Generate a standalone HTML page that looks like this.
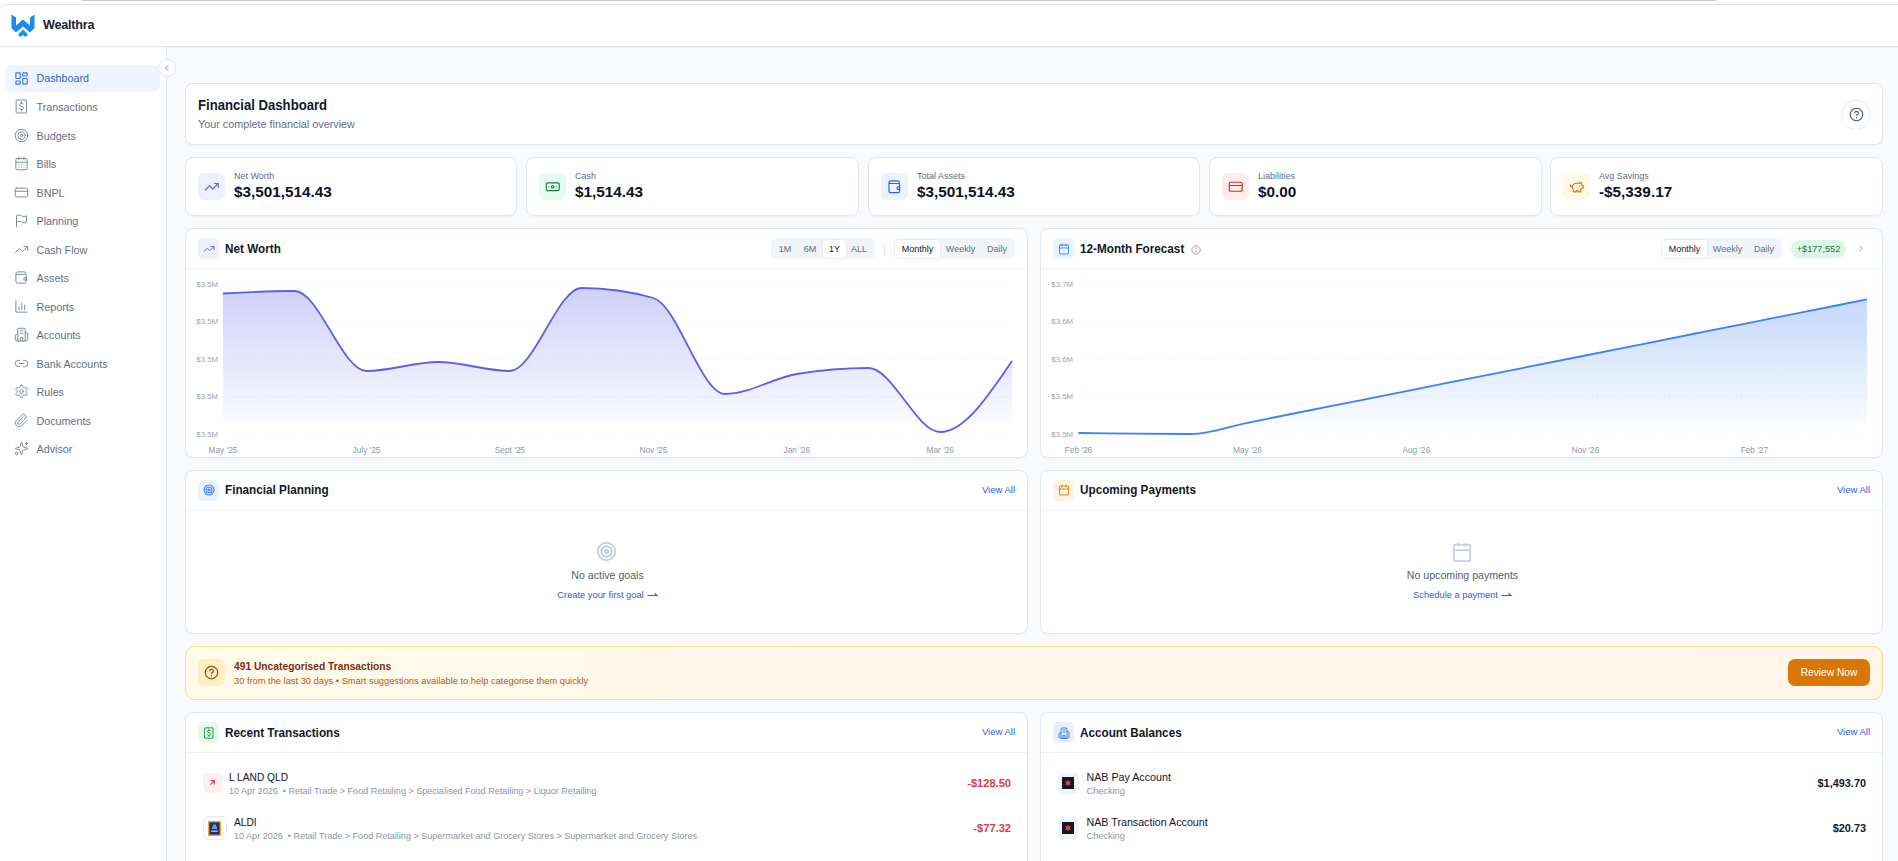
<!DOCTYPE html>
<html><head><meta charset="utf-8">
<style>
*{box-sizing:border-box;margin:0;padding:0}
html,body{width:1898px;height:861px;overflow:hidden}
body{font-family:"Liberation Sans",sans-serif;background:#f8fafc;position:relative;color:#0f172a}
.abs{position:absolute}
#topbar{position:absolute;left:82px;top:0;width:1634px;height:1px;background:#c9cacd}
#header{position:absolute;left:0;top:4px;width:1898px;height:43px;background:#fff;border-top:1px solid #e3e3e3;border-bottom:1px solid #e3e8ee;border-top-left-radius:7px;box-shadow:0 1px 2px rgba(15,23,42,.05);z-index:2}
#sidebar{position:absolute;left:0;top:47px;width:167px;height:814px;background:#fff;border-right:1px solid #e2e8f0}
.nav{position:absolute;left:5px;width:155px;height:27px;border-radius:7px;display:flex;align-items:center;font-size:10.75px;color:#5f6f86}
.nav svg{position:absolute;left:9px;width:15px;height:15px;fill:none;stroke:#74839a;stroke-width:1.5;stroke-linecap:round;stroke-linejoin:round}
.nav svg use{}
.nav span{position:absolute;left:31.5px}
.nav.active{background:#eff5fe;color:#2b63e6}
.nav.active svg{stroke:#3b74ee;stroke-width:1.9}
.nav.active span{top:6.5px}
.card{position:absolute;background:#fff;border:1px solid #e1e7ef;border-radius:8px;box-shadow:0 1px 2px rgba(15,23,42,.04)}
.stat .ic{position:absolute;left:12px;top:15px;width:27px;height:27px;border-radius:6px;display:flex;align-items:center;justify-content:center}
.stat .lb{position:absolute;left:48px;top:13px;font-size:9px;color:#5f6f86}
.stat .vl{position:absolute;left:48px;top:25px;font-size:15.3px;font-weight:bold;color:#0b1324}
.ch{position:absolute;left:0;top:0;right:0;height:40px;border-bottom:1px solid #edf1f6}
.ch .ic{position:absolute;left:12px;top:9px;width:21px;height:21px;border-radius:5px;display:flex;align-items:center;justify-content:center}
.ch .tt{position:absolute;left:39px;top:12px;font-size:12.9px;transform:scaleX(0.91);transform-origin:0 0;white-space:nowrap;font-weight:bold;color:#111827}
.up1 .ic{padding-bottom:2px}.up1 .tt{top:10.7px}
.viewall{position:absolute;right:12px;top:12.5px;font-size:9.5px;color:#2c5ee6}
.seg{position:absolute;top:9px;height:21px;background:#f1f4f8;border-radius:6px;font-size:9px;color:#5f6f86}
.seg span{position:absolute;top:1.5px;height:18px;line-height:18px;text-align:center;border-radius:4px}
.seg span.on{background:#fff;color:#111827;box-shadow:0 0 0 1px #e8edf3}
</style></head>
<body>
<svg width="0" height="0" style="position:absolute">
<defs>
<symbol id="i-dash" viewBox="0 0 24 24"><rect width="7" height="9" x="3" y="3" rx="0.8"/><rect width="7" height="5" x="14" y="3" rx="0.8"/><rect width="7" height="9" x="14" y="12" rx="0.8"/><rect width="7" height="5" x="3" y="16" rx="0.8"/></symbol>
<symbol id="i-receipt" viewBox="0 0 24 24"><path d="M4 2l2-.7 2 .7 2-.7 2 .7 2-.7 2 .7 2-.7 2 .7V22l-2 .7-2-.7-2 .7-2-.7-2 .7-2-.7-2 .7-2-.7z"/><path d="M15.2 8.3c-.5-1-1.6-1.8-3.2-1.8-1.9 0-3.2 1-3.2 2.5 0 3.4 6.4 2 6.4 5.2 0 1.6-1.3 2.6-3.2 2.6-1.6 0-2.8-.7-3.3-1.9"/><path d="M12 4.5v2M12 16.8v2.2"/></symbol>
<symbol id="i-target" viewBox="0 0 24 24"><circle cx="12" cy="12" r="10"/><circle cx="12" cy="12" r="6"/><circle cx="12" cy="12" r="2"/></symbol>
<symbol id="i-cal" viewBox="0 0 24 24"><path d="M8 2v4"/><path d="M16 2v4"/><rect width="18" height="18" x="3" y="4" rx="2"/><path d="M3 10h18"/><path d="M8 14h.01M12 14h.01M16 14h.01M8 18h.01M12 18h.01M16 18h.01"/></symbol>
<symbol id="i-cal2" viewBox="0 0 24 24"><path d="M8 2v4"/><path d="M16 2v4"/><rect width="18" height="18" x="3" y="4" rx="2"/><path d="M3 10h18"/></symbol>
<symbol id="i-card" viewBox="0 0 24 24"><rect width="20" height="14" x="2" y="5" rx="2"/><line x1="2" x2="22" y1="10" y2="10"/></symbol>
<symbol id="i-flag" viewBox="0 0 24 24"><path d="M4 22V4.5c3-1.5 6-1.5 8 0s5 1.5 8 0v10c-3 1.5-6 1.5-8 0s-5-1.5-8 0"/></symbol>
<symbol id="i-trend" viewBox="0 0 24 24"><polyline points="22 7 13.5 15.5 8.5 10.5 2 17"/><polyline points="16 7 22 7 22 13"/></symbol>
<symbol id="i-wallet" viewBox="0 0 24 24"><path d="M19 7V5.5A2.5 2.5 0 0 0 16.5 3H6a3 3 0 0 0-3 3v12a3 3 0 0 0 3 3h11.5a2 2 0 0 0 2-2v-10a2 2 0 0 0-2-2H3.5"/><path d="M19.5 12.2h-2a2 2 0 0 0 0 4h2z"/></symbol>
<symbol id="i-bars" viewBox="0 0 24 24"><path d="M3 3v18h18"/><path d="M17 17V10"/><path d="M12.5 17V6"/><path d="M8 17v-4"/></symbol>
<symbol id="i-bank" viewBox="0 0 24 24"><path d="M6 22V4a2 2 0 0 1 2-2h8a2 2 0 0 1 2 2v18Z"/><path d="M6 12H4a2 2 0 0 0-2 2v6a2 2 0 0 0 2 2h2"/><path d="M18 9h2a2 2 0 0 1 2 2v9a2 2 0 0 1-2 2h-2"/><path d="M10 6h4"/><path d="M10 10h4"/><path d="M10 22v-5h4v5"/></symbol>
<symbol id="i-link" viewBox="0 0 24 24"><path d="M9 17H7A5 5 0 0 1 7 7h2"/><path d="M15 7h2a5 5 0 1 1 0 10h-2"/><line x1="8" x2="16" y1="12" y2="12"/></symbol>
<symbol id="i-gear" viewBox="0 0 24 24"><path d="M12.22 2h-.44a2 2 0 0 0-2 2v.18a2 2 0 0 1-1 1.73l-.43.25a2 2 0 0 1-2 0l-.15-.08a2 2 0 0 0-2.73.73l-.22.38a2 2 0 0 0 .73 2.73l.15.1a2 2 0 0 1 1 1.72v.51a2 2 0 0 1-1 1.74l-.15.09a2 2 0 0 0-.73 2.73l.22.38a2 2 0 0 0 2.73.73l.15-.08a2 2 0 0 1 2 0l.43.25a2 2 0 0 1 1 1.73V20a2 2 0 0 0 2 2h.44a2 2 0 0 0 2-2v-.18a2 2 0 0 1 1-1.730l.43-.25a2 2 0 0 1 2 0l.15.08a2 2 0 0 0 2.73-.73l.22-.39a2 2 0 0 0-.73-2.73l-.15-.08a2 2 0 0 1-1-1.74v-.5a2 2 0 0 1 1-1.74l.15-.09a2 2 0 0 0 .73-2.73l-.22-.38a2 2 0 0 0-2.73-.73l-.15.08a2 2 0 0 1-2 0l-.43-.25a2 2 0 0 1-1-1.73V4a2 2 0 0 0-2-2z"/><circle cx="12" cy="12" r="3"/></symbol>
<symbol id="i-clip" viewBox="0 0 24 24"><path d="m21.44 11.05-9.19 9.19a6 6 0 0 1-8.490-8.49l8.57-8.57A4 4 0 1 1 18 8.84l-8.59 8.57a2 2 0 0 1-2.83-2.83l8.49-8.48"/></symbol>
<symbol id="i-spark" viewBox="0 0 24 24"><path d="M9.937 15.5A2 2 0 0 0 8.5 14.063l-6.135-1.582a.5.5 0 0 1 0-.962L8.5 9.936A2 2 0 0 0 9.937 8.5l1.582-6.135a.5.5 0 0 1 .963 0L14.063 8.5A2 2 0 0 0 15.5 9.937l6.135 1.581a.5.5 0 0 1 0 .964L15.5 14.063a2 2 0 0 0-1.437 1.437l-1.582 6.135a.5.5 0 0 1-.963 0z"/><path d="M20 2v4"/><path d="M22 4h-4"/><circle cx="4" cy="20" r="2"/></symbol>
<symbol id="i-help" viewBox="0 0 24 24"><circle cx="12" cy="12" r="10"/><path d="M9.09 9a3 3 0 0 1 5.83 1c0 2-3 3-3 3"/><path d="M12 17h.01"/></symbol>
<symbol id="i-globe" viewBox="0 0 24 24"><circle cx="12" cy="12" r="10"/><path d="M12 2a14.5 14.5 0 0 0 0 20 14.5 14.5 0 0 0 0-20"/><path d="M2 12h20"/></symbol>
<symbol id="i-moon" viewBox="0 0 24 24"><path d="M12 3a6 6 0 0 0 9 9 9 9 0 1 1-9-9Z"/></symbol>
<symbol id="i-bell" viewBox="0 0 24 24"><path d="M6 8a6 6 0 0 1 12 0c0 7 3 9 3 9H3s3-2 3-9"/><path d="M10.3 21a1.94 1.94 0 0 0 3.4 0"/></symbol>
<symbol id="i-money" viewBox="0 0 24 24"><rect width="20" height="12" x="2" y="6" rx="2"/><circle cx="12" cy="12" r="2"/><path d="M6 12h.01M18 12h.01"/></symbol>
<symbol id="i-piggy" viewBox="0 0 24 24"><path d="M19 5c-1.5 0-2.8 1.4-3 2-3.5-1.5-11-.3-11 5 0 1.8 0 3 2 4.5V20h4v-2h3v2h4v-4c1-.5 1.7-1 2-2h2v-4h-2c0-1-.5-1.5-1-2V5z"/><path d="M2 9v1c0 1.1.9 2 2 2h1"/><path d="M16 11h.01"/></symbol>
</defs></svg>
<div class="abs" style="left:0;top:0;width:1898px;height:6px;background:#fff"></div>
<div id="topbar"></div>
<div id="header">
  <svg class="abs" style="left:11px;top:9px" width="25" height="24" viewBox="0 0 25 24">
    <path d="M0.5,0.5 L5,3.5 L5,11.5 L12,5.5 L19,11.5 L19,3.5 L23.5,0.5 L23.5,14 L19,18.5 L12,12.5 L5,18.5 L0.5,14 Z" fill="#1a8bec"/>
    <path d="M7,20.5 L12,15.5 L17,20.5 L14.5,23 L12,21 L9.5,23 Z" fill="#1a8bec"/>
  </svg>
  <div class="abs" style="left:43px;top:13px;font-size:12.6px;font-weight:bold;color:#1a2035;letter-spacing:-0.2px">Wealthra</div>
</div>
<div id="sidebar">
<div class="nav active" style="top:18px"><svg><use href="#i-dash"/></svg><span>Dashboard</span></div>
<div class="nav" style="top:46px"><svg><use href="#i-receipt"/></svg><span>Transactions</span></div>
<div class="nav" style="top:75px"><svg><use href="#i-target"/></svg><span>Budgets</span></div>
<div class="nav" style="top:103px"><svg><use href="#i-cal"/></svg><span>Bills</span></div>
<div class="nav" style="top:132px"><svg><use href="#i-card"/></svg><span>BNPL</span></div>
<div class="nav" style="top:160px"><svg><use href="#i-flag"/></svg><span>Planning</span></div>
<div class="nav" style="top:189px"><svg><use href="#i-trend"/></svg><span>Cash Flow</span></div>
<div class="nav" style="top:217px"><svg><use href="#i-wallet"/></svg><span>Assets</span></div>
<div class="nav" style="top:246px"><svg><use href="#i-bars"/></svg><span>Reports</span></div>
<div class="nav" style="top:274px"><svg><use href="#i-bank"/></svg><span>Accounts</span></div>
<div class="nav" style="top:303px"><svg><use href="#i-link"/></svg><span>Bank Accounts</span></div>
<div class="nav" style="top:331px"><svg><use href="#i-gear"/></svg><span>Rules</span></div>
<div class="nav" style="top:360px"><svg><use href="#i-clip"/></svg><span>Documents</span></div>
<div class="nav" style="top:388px"><svg><use href="#i-spark"/></svg><span>Advisor</span></div>
<div class="abs" style="left:157.5px;top:11.5px;width:18px;height:18px;border-radius:50%;background:#fff;border:1px solid #e2e8f0;z-index:5"><svg class="abs" style="left:3px;top:3px" width="10" height="10" viewBox="0 0 24 24" fill="none" stroke="#64748b" stroke-width="2"><path d="M15 18l-6-6 6-6"/></svg></div>
</div>

<!-- header card -->
<div class="card" style="left:185px;top:83px;width:1698px;height:62px">
  <div class="abs" style="left:12px;top:12px;font-size:15px;font-weight:bold;color:#111a2e;transform:scaleX(0.875);transform-origin:0 0;white-space:nowrap">Financial Dashboard</div>
  <div class="abs" style="left:12px;top:34px;font-size:10.8px;color:#5f6f86">Your complete financial overview</div>
  <div class="abs" style="left:1655px;top:15.5px;width:30px;height:30px;border-radius:50%;border:1px solid #e5e9f0;background:#fff">
    <svg class="abs" style="left:6.5px;top:6.5px" width="15" height="15" viewBox="0 0 24 24" fill="none" stroke="#475569" stroke-width="1.8" stroke-linecap="round"><use href="#i-help"/></svg>
  </div>
</div>
<div class="card stat" style="left:185px;top:157px;width:332px;height:59px">
  <div class="ic" style="background:#eef0fe"><svg width="15.5" height="15.5" viewBox="0 0 24 24" fill="none" stroke="#6366f1" stroke-width="1.8" stroke-linecap="round" stroke-linejoin="round"><use href="#i-trend"/></svg></div>
  <div class="lb">Net Worth</div><div class="vl">$3,501,514.43</div>
</div>
<div class="card stat" style="left:526px;top:157px;width:333px;height:59px">
  <div class="ic" style="background:#e9fbf1"><svg width="15.5" height="15.5" viewBox="0 0 24 24" fill="none" stroke="#15803d" stroke-width="1.8" stroke-linecap="round" stroke-linejoin="round"><use href="#i-money"/></svg></div>
  <div class="lb">Cash</div><div class="vl">$1,514.43</div>
</div>
<div class="card stat" style="left:868px;top:157px;width:332px;height:59px">
  <div class="ic" style="background:#ebf3fe"><svg width="15.5" height="15.5" viewBox="0 0 24 24" fill="none" stroke="#2563eb" stroke-width="1.8" stroke-linecap="round" stroke-linejoin="round"><use href="#i-wallet"/></svg></div>
  <div class="lb">Total Assets</div><div class="vl">$3,501,514.43</div>
</div>
<div class="card stat" style="left:1209px;top:157px;width:333px;height:59px">
  <div class="ic" style="background:#fdeeee"><svg width="15.5" height="15.5" viewBox="0 0 24 24" fill="none" stroke="#dc2626" stroke-width="1.8" stroke-linecap="round" stroke-linejoin="round"><use href="#i-card"/></svg></div>
  <div class="lb">Liabilities</div><div class="vl">$0.00</div>
</div>
<div class="card stat" style="left:1550px;top:157px;width:333px;height:59px">
  <div class="ic" style="background:#fef8e6"><svg width="15.5" height="15.5" viewBox="0 0 24 24" fill="none" stroke="#d97706" stroke-width="1.8" stroke-linecap="round" stroke-linejoin="round"><use href="#i-piggy"/></svg></div>
  <div class="lb">Avg Savings</div><div class="vl">-$5,339.17</div>
</div>
<!--CHARTS--><div class="card" style="left:185px;top:228px;width:843px;height:230px;overflow:hidden"><div class="ch"><div class="ic" style="background:#eef0fe"><svg width="12" height="12" viewBox="0 0 24 24" fill="none" stroke="#6366f1" stroke-width="1.9" stroke-linecap="round" stroke-linejoin="round"><use href="#i-trend"/></svg></div><div class="tt">Net Worth</div><div class="seg" style="left:585px;top:9px;width:104px;"><span style="left:2px;width:24px">1M</span><span style="left:27px;width:24px">6M</span><span class="on" style="left:52px;width:23px">1Y</span><span style="left:75px;width:26px">ALL</span></div><div class="abs" style="left:698px;top:15px;width:1px;height:11px;background:#dde3ea"></div><div class="seg" style="left:708px;top:9px;width:121px;"><span class="on" style="left:1px;width:45px">Monthly</span><span style="left:47px;width:39px">Weekly</span><span style="left:88px;width:30px">Daily</span></div></div></div><div class="card" style="left:1040px;top:228px;width:843px;height:230px"><div class="ch"><div class="ic" style="background:#ebf3fe"><svg width="12" height="12" viewBox="0 0 24 24" fill="none" stroke="#3b82f6" stroke-width="1.9" stroke-linecap="round" stroke-linejoin="round"><use href="#i-cal2"/></svg></div><div class="tt">12-Month Forecast</div><svg class="abs" style="left:149.5px;top:15.5px" width="10" height="10" viewBox="0 0 24 24" fill="none" stroke="#8d97a8" stroke-width="2" stroke-linecap="round"><circle cx="12" cy="12" r="10"/><path d="M12 17v-5"/><circle cx="12" cy="7.5" r=".6" fill="#8d97a8"/></svg><div class="seg" style="left:620px;top:9px;width:121px;"><span class="on" style="left:1px;width:45px">Monthly</span><span style="left:47px;width:39px">Weekly</span><span style="left:88px;width:30px">Daily</span></div><div class="abs" style="left:750px;top:11px;width:55px;height:18px;border-radius:9px;background:#dcf7e6;color:#16794a;font-size:9.2px;line-height:18px;text-align:center">+$177,552</div><svg class="abs" style="left:815px;top:14px" width="10" height="11" viewBox="0 0 24 24" fill="none" stroke="#8a94a6" stroke-width="2.3"><path d="M9 18l6-6-6-6"/></svg></div></div><svg class="abs" style="left:0;top:0" width="1898" height="861"><defs><linearGradient id="gnw" gradientUnits="userSpaceOnUse" x1="0" y1="284" x2="0" y2="424"><stop offset="0.05" stop-color="#6366f1" stop-opacity="0.3"/><stop offset="1" stop-color="#6366f1" stop-opacity="0.03"/></linearGradient><clipPath id="clip424"><rect x="0" y="0" width="1898" height="424"/></clipPath><linearGradient id="gfc" gradientUnits="userSpaceOnUse" x1="0" y1="295" x2="0" y2="424"><stop offset="0.05" stop-color="#3b82f6" stop-opacity="0.3"/><stop offset="1" stop-color="#3b82f6" stop-opacity="0.03"/></linearGradient></defs><line x1="223" x2="1012" y1="284.5" y2="284.5" stroke="#e9edf2" stroke-width="1" stroke-dasharray="1.5 3"/><line x1="223" x2="1012" y1="321.5" y2="321.5" stroke="#e9edf2" stroke-width="1" stroke-dasharray="1.5 3"/><line x1="223" x2="1012" y1="359" y2="359" stroke="#e9edf2" stroke-width="1" stroke-dasharray="1.5 3"/><line x1="223" x2="1012" y1="396.5" y2="396.5" stroke="#e9edf2" stroke-width="1" stroke-dasharray="1.5 3"/><line x1="223" x2="1012" y1="434" y2="434" stroke="#e9edf2" stroke-width="1" stroke-dasharray="1.5 3"/><path d="M223.0,293.5 C246.9,292.2 270.8,291.0 294.7,291.0 C318.6,291.0 342.5,371.0 366.5,371.0 C390.4,371.0 414.3,362.0 438.2,362.0 C462.1,362.0 486.0,371.0 509.9,371.0 C533.8,371.0 557.7,288.0 581.6,288.0 C605.5,288.0 629.5,291.3 653.4,298.0 C677.3,304.7 701.2,394.0 725.1,394.0 C749.0,394.0 772.9,378.0 796.8,374.0 C820.7,370.0 844.6,368.0 868.5,368.0 C892.5,368.0 916.4,432.0 940.3,432.0 C964.2,432.0 988.1,396.5 1012.0,361.0 L1012,460 L223,460 Z" fill="url(#gnw)" clip-path="url(#clip424)"/><path d="M223.0,293.5 C246.9,292.2 270.8,291.0 294.7,291.0 C318.6,291.0 342.5,371.0 366.5,371.0 C390.4,371.0 414.3,362.0 438.2,362.0 C462.1,362.0 486.0,371.0 509.9,371.0 C533.8,371.0 557.7,288.0 581.6,288.0 C605.5,288.0 629.5,291.3 653.4,298.0 C677.3,304.7 701.2,394.0 725.1,394.0 C749.0,394.0 772.9,378.0 796.8,374.0 C820.7,370.0 844.6,368.0 868.5,368.0 C892.5,368.0 916.4,432.0 940.3,432.0 C964.2,432.0 988.1,396.5 1012.0,361.0" fill="none" stroke="#5b5fe9" stroke-width="1.8"/><text x="218" y="287.3" text-anchor="end" font-size="7.8" fill="#9aa3b2">$3.5M</text><text x="218" y="324.3" text-anchor="end" font-size="7.8" fill="#9aa3b2">$3.5M</text><text x="218" y="361.8" text-anchor="end" font-size="7.8" fill="#9aa3b2">$3.5M</text><text x="218" y="399.3" text-anchor="end" font-size="7.8" fill="#9aa3b2">$3.5M</text><text x="218" y="436.8" text-anchor="end" font-size="7.8" fill="#9aa3b2">$3.5M</text><text x="223.0" y="452.5" text-anchor="middle" font-size="8.3" fill="#8f98a8">May '25</text><text x="366.5" y="452.5" text-anchor="middle" font-size="8.3" fill="#8f98a8">July '25</text><text x="509.9" y="452.5" text-anchor="middle" font-size="8.3" fill="#8f98a8">Sept '25</text><text x="653.4" y="452.5" text-anchor="middle" font-size="8.3" fill="#8f98a8">Nov '25</text><text x="796.8" y="452.5" text-anchor="middle" font-size="8.3" fill="#8f98a8">Jan '26</text><text x="940.3" y="452.5" text-anchor="middle" font-size="8.3" fill="#8f98a8">Mar '26</text><line x1="1079" x2="1867" y1="284.5" y2="284.5" stroke="#e9edf2" stroke-width="1" stroke-dasharray="1.5 3"/><line x1="1079" x2="1867" y1="321.5" y2="321.5" stroke="#e9edf2" stroke-width="1" stroke-dasharray="1.5 3"/><line x1="1079" x2="1867" y1="359" y2="359" stroke="#e9edf2" stroke-width="1" stroke-dasharray="1.5 3"/><line x1="1079" x2="1867" y1="396.5" y2="396.5" stroke="#e9edf2" stroke-width="1" stroke-dasharray="1.5 3"/><line x1="1079" x2="1867" y1="434" y2="434" stroke="#e9edf2" stroke-width="1" stroke-dasharray="1.5 3"/><path d="M1078.5,433.0 C1097.3,433.2 1116.0,433.4 1134.8,433.6 C1153.6,433.8 1172.4,434.0 1191.1,434.0 C1209.9,434.0 1228.7,426.5 1247.5,422.8 C1266.2,419.0 1285.0,415.3 1303.8,411.5 C1322.6,407.8 1341.3,404.1 1360.1,400.3 C1378.9,396.6 1397.7,392.9 1416.4,389.1 C1435.2,385.4 1454.0,381.6 1472.8,377.9 C1491.5,374.2 1510.3,370.4 1529.1,366.7 C1547.8,362.9 1566.6,359.2 1585.4,355.5 C1604.2,351.7 1622.9,348.0 1641.7,344.3 C1660.5,340.5 1679.3,336.8 1698.0,333.0 C1716.8,329.3 1735.6,325.6 1754.4,321.8 C1773.1,318.1 1791.9,314.4 1810.7,310.6 C1829.5,306.9 1848.2,303.1 1867.0,299.4 L1867,460 L1078.5,460 Z" fill="url(#gfc)" clip-path="url(#clip424)"/><path d="M1078.5,433.0 C1097.3,433.2 1116.0,433.4 1134.8,433.6 C1153.6,433.8 1172.4,434.0 1191.1,434.0 C1209.9,434.0 1228.7,426.5 1247.5,422.8 C1266.2,419.0 1285.0,415.3 1303.8,411.5 C1322.6,407.8 1341.3,404.1 1360.1,400.3 C1378.9,396.6 1397.7,392.9 1416.4,389.1 C1435.2,385.4 1454.0,381.6 1472.8,377.9 C1491.5,374.2 1510.3,370.4 1529.1,366.7 C1547.8,362.9 1566.6,359.2 1585.4,355.5 C1604.2,351.7 1622.9,348.0 1641.7,344.3 C1660.5,340.5 1679.3,336.8 1698.0,333.0 C1716.8,329.3 1735.6,325.6 1754.4,321.8 C1773.1,318.1 1791.9,314.4 1810.7,310.6 C1829.5,306.9 1848.2,303.1 1867.0,299.4" fill="none" stroke="#3b82f6" stroke-width="1.8"/><text x="1073" y="287.3" text-anchor="end" font-size="7.8" fill="#9aa3b2">$3.7M</text><text x="1073" y="324.3" text-anchor="end" font-size="7.8" fill="#9aa3b2">$3.6M</text><text x="1073" y="361.8" text-anchor="end" font-size="7.8" fill="#9aa3b2">$3.6M</text><text x="1073" y="399.3" text-anchor="end" font-size="7.8" fill="#9aa3b2">$3.5M</text><text x="1073" y="436.8" text-anchor="end" font-size="7.8" fill="#9aa3b2">$3.5M</text><text x="1078.5" y="452.5" text-anchor="middle" font-size="8.3" fill="#8f98a8">Feb '26</text><text x="1247.5" y="452.5" text-anchor="middle" font-size="8.3" fill="#8f98a8">May '26</text><text x="1416.4" y="452.5" text-anchor="middle" font-size="8.3" fill="#8f98a8">Aug '26</text><text x="1585.4" y="452.5" text-anchor="middle" font-size="8.3" fill="#8f98a8">Nov '26</text><text x="1754.4" y="452.5" text-anchor="middle" font-size="8.3" fill="#8f98a8">Feb '27</text></svg><!--/CHARTS-->
<!--LOWER--><div class="card" style="left:185px;top:470px;width:843px;height:164px"><div class="ch up1"><div class="ic" style="background:#ebf3fe"><svg width="12" height="12" viewBox="0 0 24 24" fill="none" stroke="#3b82f6" stroke-width="2.2" stroke-linecap="round" stroke-linejoin="round"><use href="#i-target"/></svg></div><div class="tt">Financial Planning</div><div class="viewall">View All</div></div><svg class="abs" style="left:410px;top:70px" width="21" height="21" viewBox="0 0 24 24" fill="none" stroke="#c7cfda" stroke-width="2.2"><use href="#i-target"/></svg><div class="abs" style="left:0;width:843px;top:98px;text-align:center;font-size:10.6px;color:#566070">No active goals</div><div class="abs" style="left:0;width:843px;top:119px;text-align:center;font-size:9.3px;color:#2f5bd8">Create your first goal<svg width="11" height="6" viewBox="0 0 11 6" style="margin-left:3px;vertical-align:1px"><path d="M0.5 4.5 H10 L7.5 2.2" fill="none" stroke="#2f5bd8" stroke-width="1.1"/></svg></div></div><div class="card" style="left:1040px;top:470px;width:843px;height:164px"><div class="ch up1"><div class="ic" style="background:#fef3e6"><svg width="12" height="12" viewBox="0 0 24 24" fill="none" stroke="#ea8a1a" stroke-width="2.2" stroke-linecap="round" stroke-linejoin="round"><use href="#i-cal2"/></svg></div><div class="tt">Upcoming Payments</div><div class="viewall">View All</div></div><svg class="abs" style="left:410px;top:70px" width="22" height="22" viewBox="0 0 24 24" fill="none" stroke="#c7cfda" stroke-width="1.9"><use href="#i-cal2"/></svg><div class="abs" style="left:0;width:843px;top:98px;text-align:center;font-size:10.6px;color:#566070">No upcoming payments</div><div class="abs" style="left:0;width:843px;top:119px;text-align:center;font-size:9.3px;color:#2f5bd8">Schedule a payment<svg width="11" height="6" viewBox="0 0 11 6" style="margin-left:3px;vertical-align:1px"><path d="M0.5 4.5 H10 L7.5 2.2" fill="none" stroke="#2f5bd8" stroke-width="1.1"/></svg></div></div><div class="abs" style="left:185px;top:646px;width:1698px;height:54px;border-radius:10px;border:1px solid #fcdf8c;background:linear-gradient(90deg,#fffaea,#fff6ea)"><div class="abs" style="left:12px;top:12px;width:27px;height:27px;border-radius:6px;background:#fdf0c4"><svg class="abs" style="left:6px;top:6px" width="15" height="15" viewBox="0 0 24 24" fill="none" stroke="#9a4a12" stroke-width="2" stroke-linecap="round"><use href="#i-help"/></svg></div><div class="abs" style="left:48px;top:14px;font-size:10.25px;font-weight:bold;color:#7c2d12">491 Uncategorised Transactions</div><div class="abs" style="left:48px;top:29px;font-size:9.3px;color:#b4581c">30 from the last 30 days &#8226; Smart suggestions available to help categorise them quickly</div><div class="abs" style="left:1602px;top:12px;width:82px;height:27px;border-radius:7px;background:#d97706;color:#fff;font-size:10.2px;line-height:27px;text-align:center">Review Now</div></div><div class="card" style="left:185px;top:712px;width:843px;height:170px"><div class="ch "><div class="ic" style="background:#e8f8ef"><svg width="12" height="12" viewBox="0 0 24 24" fill="none" stroke="#16a34a" stroke-width="2" stroke-linecap="round" stroke-linejoin="round"><use href="#i-receipt"/></svg></div><div class="tt">Recent Transactions</div><div class="viewall">View All</div></div><div class="abs" style="left:17px;top:60px;width:19px;height:20px;border-radius:5px;background:#fdeff0"><svg class="abs" style="left:5px;top:5px" width="9" height="9" viewBox="0 0 24 24" fill="none" stroke="#e0484f" stroke-width="3" stroke-linecap="round"><path d="M7 17L17 7M8 7h9v9"/></svg></div><div class="abs" style="left:43px;top:59px;font-size:10.2px;color:#0f172a">L LAND QLD</div><div class="abs" style="left:43px;top:73px;font-size:9.05px;color:#8c96a6">10 Apr 2026 &nbsp;&#8226; Retail Trade &gt; Food Retailing &gt; Specialised Food Retailing &gt; Liquor Retailing</div><div class="abs" style="right:16px;top:64px;font-size:11.1px;font-weight:bold;color:#dc3c3c">-$128.50</div><div class="abs" style="left:17px;top:103px;width:24px;height:24px;border-radius:5px;background:#fff;border:1px solid #e5e9f0"><svg class="abs" style="left:4px;top:3.8px" width="13" height="15" viewBox="0 0 13 15"><rect x="0.7" y="0.7" width="11.6" height="13.6" fill="#1c2c78" stroke="#f6a21a" stroke-width="1.4"/><path d="M3.6 8 L5.2 3.6 H7.8 L9.4 8Z" fill="#5aa0e6"/><rect x="3.2" y="9.6" width="6.6" height="1.1" fill="#dfe8f5"/></svg></div><div class="abs" style="left:48px;top:104px;font-size:10.2px;color:#0f172a">ALDI</div><div class="abs" style="left:48px;top:118px;font-size:9.05px;color:#8c96a6">10 Apr 2026 &nbsp;&#8226; Retail Trade &gt; Food Retailing &gt; Supermarket and Grocery Stores &gt; Supermarket and Grocery Stores</div><div class="abs" style="right:16px;top:109px;font-size:11.1px;font-weight:bold;color:#dc3c3c">-$77.32</div></div><div class="card" style="left:1040px;top:712px;width:843px;height:170px"><div class="ch "><div class="ic" style="background:#e8f0fe"><svg width="12" height="12" viewBox="0 0 24 24" fill="none" stroke="#3b82f6" stroke-width="2" stroke-linecap="round" stroke-linejoin="round"><use href="#i-bank"/></svg></div><div class="tt">Account Balances</div><div class="viewall">View All</div></div><div class="abs" style="left:17px;top:60px;width:21px;height:21px;border-radius:5px;background:#f1f4f8"><div class="abs" style="left:4px;top:4px;width:12px;height:12px;background:#111827"><svg class="abs" style="left:2px;top:2px" width="8" height="8" viewBox="0 0 10 10"><path d="M5 0.5 L6 3.2 L9 2.5 L7 5 L9 7.5 L6 6.8 L5 9.5 L4 6.8 L1 7.5 L3 5 L1 2.5 L4 3.2Z" fill="#e5483a"/></svg></div></div><div class="abs" style="left:45.5px;top:58px;font-size:10.7px;color:#0f172a">NAB Pay Account</div><div class="abs" style="left:45.5px;top:73px;font-size:9.2px;color:#8c96a6">Checking</div><div class="abs" style="right:16px;top:64px;font-size:10.9px;font-weight:bold;color:#0f172a">$1,493.70</div><div class="abs" style="left:17px;top:105px;width:21px;height:21px;border-radius:5px;background:#f1f4f8"><div class="abs" style="left:4px;top:4px;width:12px;height:12px;background:#111827"><svg class="abs" style="left:2px;top:2px" width="8" height="8" viewBox="0 0 10 10"><path d="M5 0.5 L6 3.2 L9 2.5 L7 5 L9 7.5 L6 6.8 L5 9.5 L4 6.8 L1 7.5 L3 5 L1 2.5 L4 3.2Z" fill="#e5483a"/></svg></div></div><div class="abs" style="left:45.5px;top:103px;font-size:10.7px;color:#0f172a">NAB Transaction Account</div><div class="abs" style="left:45.5px;top:118px;font-size:9.2px;color:#8c96a6">Checking</div><div class="abs" style="right:16px;top:109px;font-size:10.9px;font-weight:bold;color:#0f172a">$20.73</div></div><!--/LOWER-->
<!--HDR--><div id="hdr-right">
<svg class="abs" style="left:1605.5px;top:17.4px" width="15.8" height="15.8" viewBox="0 0 24 24" fill="none" stroke="#2563eb" stroke-width="2" stroke-linecap="round" stroke-linejoin="round"><use href="#i-spark"/></svg>
<svg class="abs" style="left:1633px;top:15px" width="21" height="21" viewBox="0 0 21 21"><circle cx="10.5" cy="10.5" r="9.6" fill="#d9974f"/><path d="M3.5 15 A9.6 9.6 0 0 0 17.5 15" stroke="#c07a3a" stroke-width="1.5" fill="none" stroke-dasharray="1.2 1"/><path d="M4.3 7.5 L7 6.2 L8.2 9.5 L10.5 7.4 L12.8 9.5 L14 6.2 L16.7 7.5 L16.5 12.5 L10.5 17 L4.5 12.5Z" fill="#1b8de6"/><path d="M8 13.2 L10.5 11.2 L13 13.2 L10.5 16Z" fill="#c98a4a"/><circle cx="9" cy="4.2" r=".6" fill="#f8d35a"/><circle cx="11" cy="3.6" r=".6" fill="#f8d35a"/><circle cx="7.3" cy="5.2" r=".6" fill="#f8d35a"/></svg>
<div class="abs" style="left:1651px;top:11px;width:7px;height:7px;border-radius:50%;background:#4fbf86"><div class="abs" style="left:2.8px;top:2.8px;width:1.4px;height:1.4px;border-radius:50%;background:#1d6b45"></div></div>
<svg class="abs" style="left:1666px;top:18px" width="14" height="14" viewBox="0 0 24 24" fill="none" stroke="#64748b" stroke-width="2" stroke-linecap="round" stroke-linejoin="round"><use href="#i-moon"/></svg>
<svg class="abs" style="left:1696px;top:17px" width="15" height="15" viewBox="0 0 24 24" fill="none" stroke="#64748b" stroke-width="2" stroke-linecap="round" stroke-linejoin="round"><use href="#i-bell"/></svg>
<div class="abs" style="left:1705.5px;top:12.2px;width:13px;height:13px;border-radius:50%;background:#e53935;color:#fff;font-size:7.5px;line-height:13px;text-align:center;font-weight:bold">3</div>
<div class="abs" style="left:1720px;top:14px;width:85px;height:24px;border-radius:7px;background:#f1f4f9"></div>
<svg class="abs" style="left:1728.7px;top:19.5px" width="13" height="13" viewBox="0 0 24 24" fill="none" stroke="#475569" stroke-width="2"><use href="#i-globe"/></svg>
<div class="abs" style="left:1748px;top:22px;font-size:7px;color:#475569">GB</div>
<div class="abs" style="left:1761px;top:19px;font-size:10.7px;color:#334155">English</div>
<div class="abs" style="left:1814px;top:17px;width:1px;height:17px;background:#e2e8f0"></div>
<div class="abs" style="left:1826px;top:14px;width:24px;height:24px;border-radius:50%;background:#7c4dbd;color:#fff;font-size:12px;line-height:24px;text-align:center">S</div>
<div class="abs" style="left:1856px;top:19.5px;font-size:10.45px;color:#334155">Shane</div>
</div><!--/HDR-->
</body></html>
